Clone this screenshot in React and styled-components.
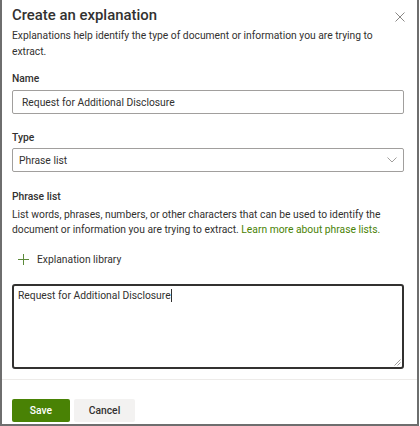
import styled, { createGlobalStyle } from "styled-components";

const GlobalStyle = createGlobalStyle`
  html, body { margin: 0; padding: 0; background: #fff; }
  * { box-sizing: border-box; }
`;

const Panel = styled.div`
  width: 419px;
  height: 426px;
  border: 2px solid #6e6e6e;
  border-top: none;
  font-family: Roboto, "Liberation Sans", sans-serif;
  font-size: 10.3px;
  color: #323130;
  display: flex;
  flex-direction: column;
  overflow: hidden;
`;

const Body = styled.div`
  padding: 0 14px 0 10px;
  display: flex;
  flex-direction: column;
`;

const Header = styled.div`
  display: flex;
  justify-content: space-between;
  align-items: flex-start;
  padding-top: 4px;
`;

const Title = styled.h1`
  margin: 0;
  font-size: 14.9px;
  font-weight: 500;
  line-height: 22px;
`;

const CloseButton = styled.button`
  border: none;
  background: none;
  padding: 0;
  margin: 8px -2px 0 0;
  width: 10px;
  height: 10px;
  display: flex;
  color: #8a8886;
`;

const Text = styled.p`
  margin: ${(p) => p.$top || 0}px 0 0;
  line-height: ${(p) => p.$lh || 16}px;
`;

const Link = styled.a`
  color: #498205;
  text-decoration: none;
`;

const Label = styled.label`
  display: block;
  font-weight: 500;
  line-height: 16px;
  margin-top: ${(p) => p.$top}px;
  margin-bottom: ${(p) => p.$bottom}px;
`;

const Field = styled.div`
  height: 24px;
  border: 1px solid #a19f9d;
  border-radius: 2px;
  display: flex;
  align-items: center;
  justify-content: space-between;
  padding: 0 6px 0 ${(p) => p.$pad}px;
  margin-right: -1px;
`;

const AddRow = styled.div`
  display: flex;
  align-items: center;
  gap: 8px;
  margin-top: 14px;
  padding-left: 6px;
  height: 16px;
`;

const TextArea = styled.div`
  margin-top: 17px;
  height: 85px;
  border: 2px solid #323130;
  border-radius: 3px;
  padding: 2px 4px;
  line-height: 16px;
  position: relative;
  margin-right: -1px;
`;

const Caret = styled.span`
  display: inline-block;
  width: 1px;
  height: 13px;
  background: #323130;
  vertical-align: -3px;
`;

const Grip = styled.svg`
  position: absolute;
  right: 1px;
  bottom: 1px;
`;

const Divider = styled.div`
  height: 1px;
  background: #edebe9;
  margin-top: 10px;
`;

const Footer = styled.div`
  display: flex;
  gap: 4px;
  padding: 19px 0 0 10px;
`;

const Button = styled.button`
  height: 23px;
  width: ${(p) => p.$w}px;
  border: none;
  border-radius: 2px;
  font-family: inherit;
  font-size: 10.3px;
  font-weight: 500;
  padding: 0;
  background: ${(p) => (p.$primary ? "#498205" : "#f3f2f1")};
  color: ${(p) => (p.$primary ? "#fff" : "#323130")};
`;

export default function App() {
  return (
    <>
      <GlobalStyle />
      <Panel>
        <Body>
          <Header>
            <Title>Create an explanation</Title>
            <CloseButton aria-label="Close">
              <svg width="10" height="10" viewBox="0 0 10 10">
                <path d="M0.5 0.5L9.5 9.5M9.5 0.5L0.5 9.5" stroke="currentColor" strokeWidth="1" />
              </svg>
            </CloseButton>
          </Header>
          <Text $top={2}>
            Explanations help identify the type of document or information you are trying to extract.
          </Text>

          <Label $top={11} $bottom={3}>Name</Label>
          <Field $pad={9}>Request for Additional Disclosure</Field>

          <Label $top={16} $bottom={2}>Type</Label>
          <Field $pad={6}>
            Phrase list
            <svg width="10" height="6" viewBox="0 0 10 6">
              <path d="M0.5 0.5L5 5L9.5 0.5" fill="none" stroke="#a19f9d" strokeWidth="1" />
            </svg>
          </Field>

          <Label $top={17} $bottom={2}>Phrase list</Label>
          <Text $lh={15}>
            List words, phrases, numbers, or other characters that can be used to identify the
            document or information you are trying to extract.{" "}
            <Link href="#">Learn more about phrase lists.</Link>
          </Text>

          <AddRow>
            <svg width="11" height="11" viewBox="0 0 11 11">
              <path d="M5.5 0V11M0 5.5H11" stroke="#5c8a3a" strokeWidth="1" />
            </svg>
            Explanation library
          </AddRow>

          <TextArea>
            Request for Additional Disclosure
            <Caret />
            <Grip width="7" height="7" viewBox="0 0 7 7">
              <path d="M6.5 0.5L0.5 6.5M6.5 3.5L3.5 6.5" stroke="#a19f9d" strokeWidth="1" />
            </Grip>
          </TextArea>
        </Body>
        <Divider />
        <Footer>
          <Button $primary $w={58}>Save</Button>
          <Button $w={61}>Cancel</Button>
        </Footer>
      </Panel>
    </>
  );
}
